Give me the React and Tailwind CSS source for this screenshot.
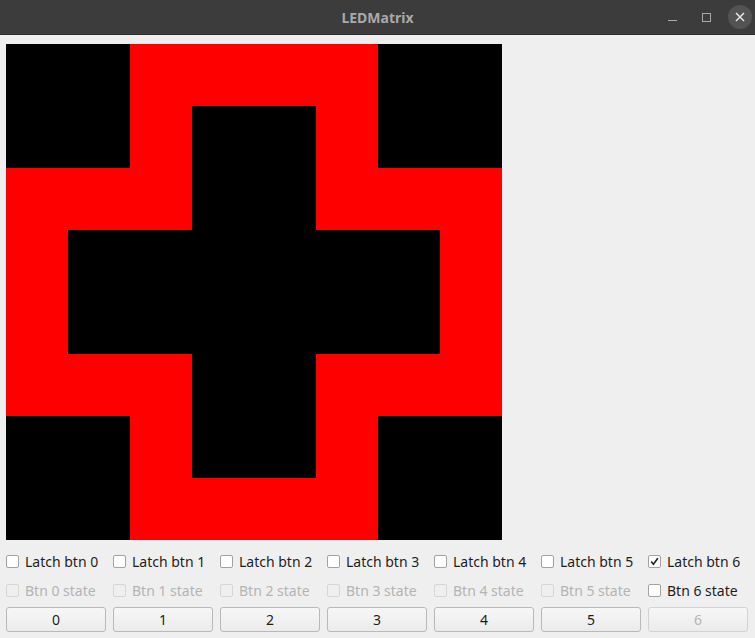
import React from 'react';

// 8x8 pattern, 1 = red
const PATTERN = [
    '00111100',
    '00100100',
    '11100111',
    '10000001',
    '10000001',
    '11100111',
    '00100100',
    '00111100',
];

const BTNS = [0, 1, 2, 3, 4, 5, 6];

const Check = ({ checked, disabled, label }) => (
    <div className={`flex items-center gap-[6px] h-[20px] ${disabled ? 'text-[#b4b4b4]' : 'text-[#1e1e1e]'}`}>
        <div
            className={`w-[13px] h-[13px] shrink-0 rounded-[2px] border flex items-center justify-center ${disabled ? 'border-[#d6d6d6] bg-[#efefef]' : 'border-[#a3a3a3] bg-white'}`}
        >
            {checked && (
                <svg width="9" height="9" viewBox="0 0 9 9" fill="none" stroke="#1e1e1e" strokeWidth="1.6">
                    <path d="M1.2 4.6 L3.4 7.2 L7.8 1.2" />
                </svg>
            )}
        </div>
        <span className="whitespace-nowrap">{label}</span>
    </div>
);

export default function App() {
    return (
        <div className="w-[755px] h-[638px] bg-[#efefef] flex flex-col overflow-hidden font-['Noto_Sans','DejaVu_Sans',sans-serif] text-[14px]">
            {/* title bar */}
            <div className="relative h-[35px] bg-[#3c3c3c] border-b border-[#2c2c2c] flex items-center justify-center shrink-0">
                <span className="font-bold text-[14px] text-[#a9a9a9]">LEDMatrix</span>
                <div className="absolute right-[3px] top-0 h-full flex items-center gap-[10px]">
                    <div className="w-[24px] h-[24px] flex items-center justify-center">
                        <div className="w-[9px] h-[1px] bg-[#aaaaaa] mt-[6px]" />
                    </div>
                    <div className="w-[24px] h-[24px] flex items-center justify-center">
                        <div className="w-[9px] h-[9px] border border-[#aaaaaa]" />
                    </div>
                    <div className="w-[24px] h-[24px] rounded-full bg-[#535353] flex items-center justify-center">
                        <svg width="10" height="10" viewBox="0 0 10 10" stroke="#e6e6e6" strokeWidth="1.5">
                            <path d="M1 1 L9 9 M9 1 L1 9" />
                        </svg>
                    </div>
                </div>
            </div>

            <div className="pl-[6px] pt-[9px] flex flex-col">
                {/* LED matrix */}
                <div className="grid grid-cols-8 w-[496px] h-[496px]">
                    {PATTERN.flatMap((row, r) =>
                        row.split('').map((c, i) => (
                            <div key={`${r}-${i}`} className={c === '1' ? 'bg-[#ff0000]' : 'bg-black'} />
                        ))
                    )}
                </div>

                {/* controls */}
                <div className="grid grid-cols-[repeat(7,100px)] gap-x-[7px] mt-[11px]">
                    {BTNS.map((n) => (
                        <Check key={`l${n}`} label={`Latch btn ${n}`} checked={n === 6} />
                    ))}
                </div>
                <div className="grid grid-cols-[repeat(7,100px)] gap-x-[7px] mt-[9px]">
                    {BTNS.map((n) => (
                        <Check key={`s${n}`} label={`Btn ${n} state`} disabled={n !== 6} />
                    ))}
                </div>
                <div className="grid grid-cols-[repeat(7,100px)] gap-x-[7px] mt-[7px]">
                    {BTNS.map((n) => (
                        <div
                            key={`b${n}`}
                            className={`h-[25px] rounded-[3px] border flex items-center justify-center bg-gradient-to-b from-[#f7f7f7] to-[#ebebeb] ${n === 6 ? 'border-[#d2d2d2] text-[#b4b4b4]' : 'border-[#b9b9b9] text-[#1e1e1e]'}`}
                        >
                            {n}
                        </div>
                    ))}
                </div>
            </div>
        </div>
    );
}
